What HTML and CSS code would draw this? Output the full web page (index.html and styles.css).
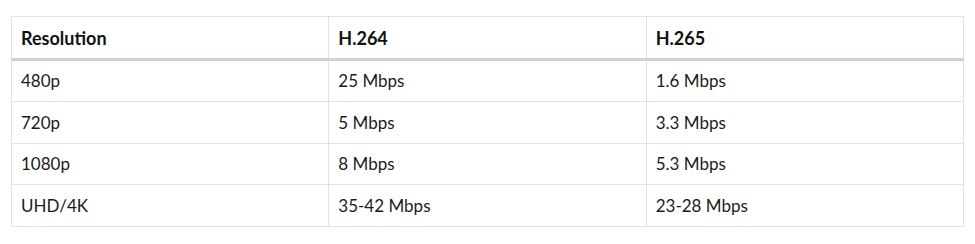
FILE: index.html
```html
<!DOCTYPE html>
<html lang="en">
<head>
  <meta charset="UTF-8" />
  <title>Bitrate by resolution</title>
  <link rel="stylesheet" href="styles.css">
</head>
<body>
  <table class="bitrates">
    <thead>
      <tr>
        <th>Resolution</th>
        <th>H.264</th>
        <th>H.265</th>
      </tr>
    </thead>
    <tbody>
      <tr><td>480p</td><td>25 Mbps</td><td>1.6 Mbps</td></tr>
      <tr><td>720p</td><td>5 Mbps</td><td>3.3 Mbps</td></tr>
      <tr><td>1080p</td><td>8 Mbps</td><td>5.3 Mbps</td></tr>
      <tr><td>UHD/4K</td><td>35-42 Mbps</td><td>23-28 Mbps</td></tr>
    </tbody>
  </table>
</body>
</html>
```

FILE: styles.css
```css
*, *::before, *::after { box-sizing: border-box; }
html, body { margin: 0; padding: 0; }
body {
  font-family: Lato, "Liberation Sans", sans-serif;
  background-color: #fff;
  color: #1b1b1b;
  padding: 16px 11px 0 11px;
}
.bitrates {
  width: 953px;
  border-collapse: collapse;
  font-size: 17px;
  table-layout: fixed;
}
.bitrates th, .bitrates td {
  border: 1px solid #e2e2e2;
  text-align: left;
  padding: 0 9px;
  height: 41.8px;
}
.bitrates th {
  font-size: 18px;
  font-weight: 700;
  color: #111;
  height: 43px;
  border-bottom: 3px solid #ccd3d8;
}
```
